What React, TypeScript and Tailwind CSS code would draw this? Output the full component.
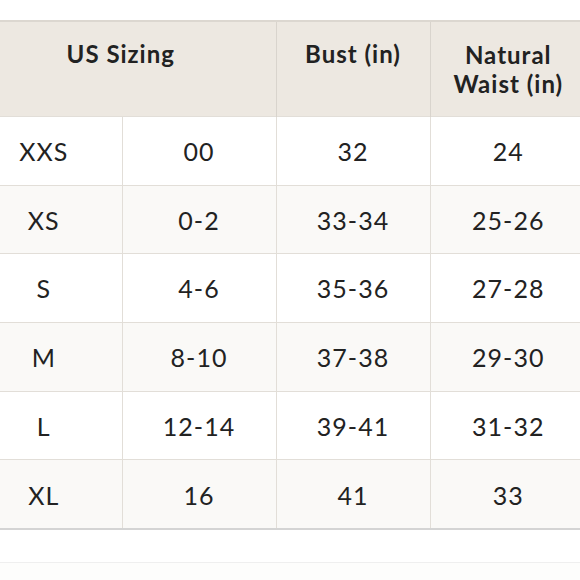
const rows = [
  ["XXS", "00", "32", "24"],
  ["XS", "0-2", "33-34", "25-26"],
  ["S", "4-6", "35-36", "27-28"],
  ["M", "8-10", "37-38", "29-30"],
  ["L", "12-14", "39-41", "31-32"],
  ["XL", "16", "41", "33"],
];

const heights = ["h-[69px]", "h-[68px]", "h-[69px]", "h-[69px]", "h-[68px]", "h-[69px]"];

export default function App() {
  return (
    <div
      className="w-[580px] h-[580px] overflow-hidden bg-white text-[#222]"
      style={{ fontFamily: "Lato, 'Open Sans', sans-serif" }}
    >
      <div className="pt-[20px] ml-[-34px] w-[620px]">
        <table className="border-collapse table-fixed w-[620px]">
          <colgroup>
            <col className="w-[156px]" />
            <col className="w-[154px]" />
            <col className="w-[154px]" />
            <col className="w-[156px]" />
          </colgroup>
          <thead>
            <tr className="h-[95px] bg-[#ede8e1] border-t-2 border-[#dcd7d0]">
              <th
                colSpan={2}
                className="border-r border-[#d9d4cd] text-[24px] font-bold leading-[29px] tracking-[1px] text-center align-middle pb-[30px]"
              >
                US Sizing
              </th>
              <th className="border-r border-[#d9d4cd] text-[24px] font-bold leading-[29px] tracking-[1px] text-center pb-[30px]">
                Bust (in)
              </th>
              <th className="text-[24px] font-bold leading-[29px] tracking-[1px] text-center">
                Natural
                <br />
                Waist (in)
              </th>
            </tr>
          </thead>
          <tbody>
            {rows.map((r, i) => (
              <tr
                key={r[0]}
                className={`${heights[i]} border-t border-[#e2ded8] ${i % 2 === 1 ? "bg-[#faf9f7]" : "bg-white"}`}
              >
                {r.map((c, j) => (
                  <td
                    key={j}
                    className={`text-[25px] tracking-[1px] text-center align-middle pt-[3px] ${j < 3 ? "border-r border-[#e2ded8]" : ""}`}
                  >
                    {c}
                  </td>
                ))}
              </tr>
            ))}
          </tbody>
        </table>
        <div className="h-[2px] bg-[#d4d4d4]" />
        <div className="h-[32px]" />
        <div className="h-px bg-[#efefef]" />
        <div className="h-[20px] bg-[#fdfdfc]" />
      </div>
    </div>
  );
}
